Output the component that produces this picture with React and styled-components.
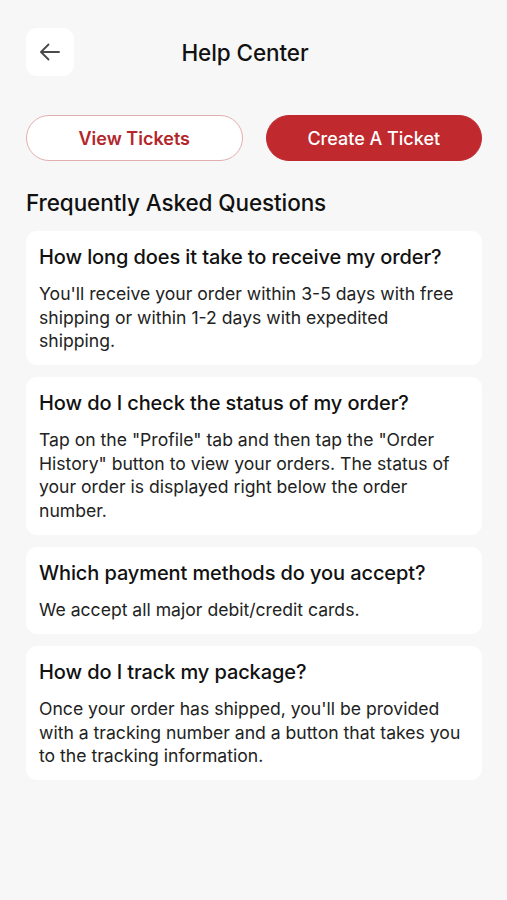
import React from "react";
import styled, { createGlobalStyle } from "styled-components";

const Global = createGlobalStyle`
  html, body { margin: 0; padding: 0; background: #f7f7f7; }
  body { font-family: Inter, "Noto Sans", "Liberation Sans", sans-serif; -webkit-font-smoothing: antialiased; }
  * { box-sizing: border-box; }
`;

const Page = styled.div`
  min-height: 900px;
  background: #f7f7f7;
  padding: 28px 25px 40px 26px;
`;

const Header = styled.header`
  display: grid;
  grid-template-columns: 48px 1fr 66px;
  align-items: center;
  height: 48px;
`;

const BackButton = styled.button`
  width: 48px;
  height: 48px;
  border: none;
  border-radius: 11px;
  background: #ffffff;
  display: flex;
  align-items: center;
  justify-content: center;
  padding: 0;
  cursor: pointer;
`;

const Title = styled.h1`
  margin: 0;
  text-align: center;
  font-size: 22.5px;
  font-weight: 500;
  color: #111;
  letter-spacing: -0.1px;
`;

const ButtonRow = styled.div`
  display: grid;
  grid-template-columns: 1fr 1fr;
  gap: 23px;
  margin-top: 39px;
`;

const PillButton = styled.button`
  height: 46px;
  border-radius: 23px;
  font-family: inherit;
  font-size: 18px;
  font-weight: ${(p) => (p.$primary ? 500 : 600)};
  cursor: pointer;
  border: 1.5px solid ${(p) => (p.$primary ? "#c0292e" : "#e3aeae")};
  background: ${(p) => (p.$primary ? "#c0292e" : "#ffffff")};
  color: ${(p) => (p.$primary ? "#ffffff" : "#b3262c")};
`;

const SectionTitle = styled.h2`
  margin: 28px 0 14px;
  font-size: 22.5px;
  line-height: 28px;
  font-weight: 500;
  color: #111;
  letter-spacing: -0.1px;
`;

const List = styled.div`
  display: flex;
  flex-direction: column;
  gap: 12.5px;
`;

const Card = styled.section`
  background: #ffffff;
  border-radius: 11px;
  padding: 13px 13px 12px;
`;

const Question = styled.h3`
  margin: 0;
  font-size: 20px;
  line-height: 26px;
  font-weight: 500;
  color: #111;
  letter-spacing: -0.1px;
`;

const Answer = styled.p`
  margin: 12px 0 0;
  font-size: 17.6px;
  line-height: 23.6px;
  font-weight: 400;
  color: #222;
`;

const faqs = [
  {
    q: "How long does it take to receive my order?",
    a: "You'll receive your order within 3-5 days with free shipping or within 1-2 days with expedited shipping.",
  },
  {
    q: "How do I check the status of my order?",
    a: 'Tap on the "Profile" tab and then tap the "Order History" button to view your orders. The status of your order is displayed right below the order number.',
  },
  {
    q: "Which payment methods do you accept?",
    a: "We accept all major debit/credit cards.",
  },
  {
    q: "How do I track my package?",
    a: "Once your order has shipped, you'll be provided with a tracking number and a button that takes you to the tracking information.",
  },
];

export default function App() {
  return (
    <>
      <Global />
      <Page>
        <Header>
          <BackButton aria-label="Back">
            <svg width="24" height="24" viewBox="0 0 24 24" fill="none" stroke="#4a4a4a" strokeWidth="1.8" strokeLinecap="round" strokeLinejoin="round">
              <path d="M21 12H3.5" />
              <path d="M10.5 4.5 3 12l7.5 7.5" />
            </svg>
          </BackButton>
          <Title>Help Center</Title>
          <span />
        </Header>
        <ButtonRow>
          <PillButton>View Tickets</PillButton>
          <PillButton $primary>Create A Ticket</PillButton>
        </ButtonRow>
        <SectionTitle>Frequently Asked Questions</SectionTitle>
        <List>
          {faqs.map((f) => (
            <Card key={f.q}>
              <Question>{f.q}</Question>
              <Answer>{f.a}</Answer>
            </Card>
          ))}
        </List>
      </Page>
    </>
  );
}
